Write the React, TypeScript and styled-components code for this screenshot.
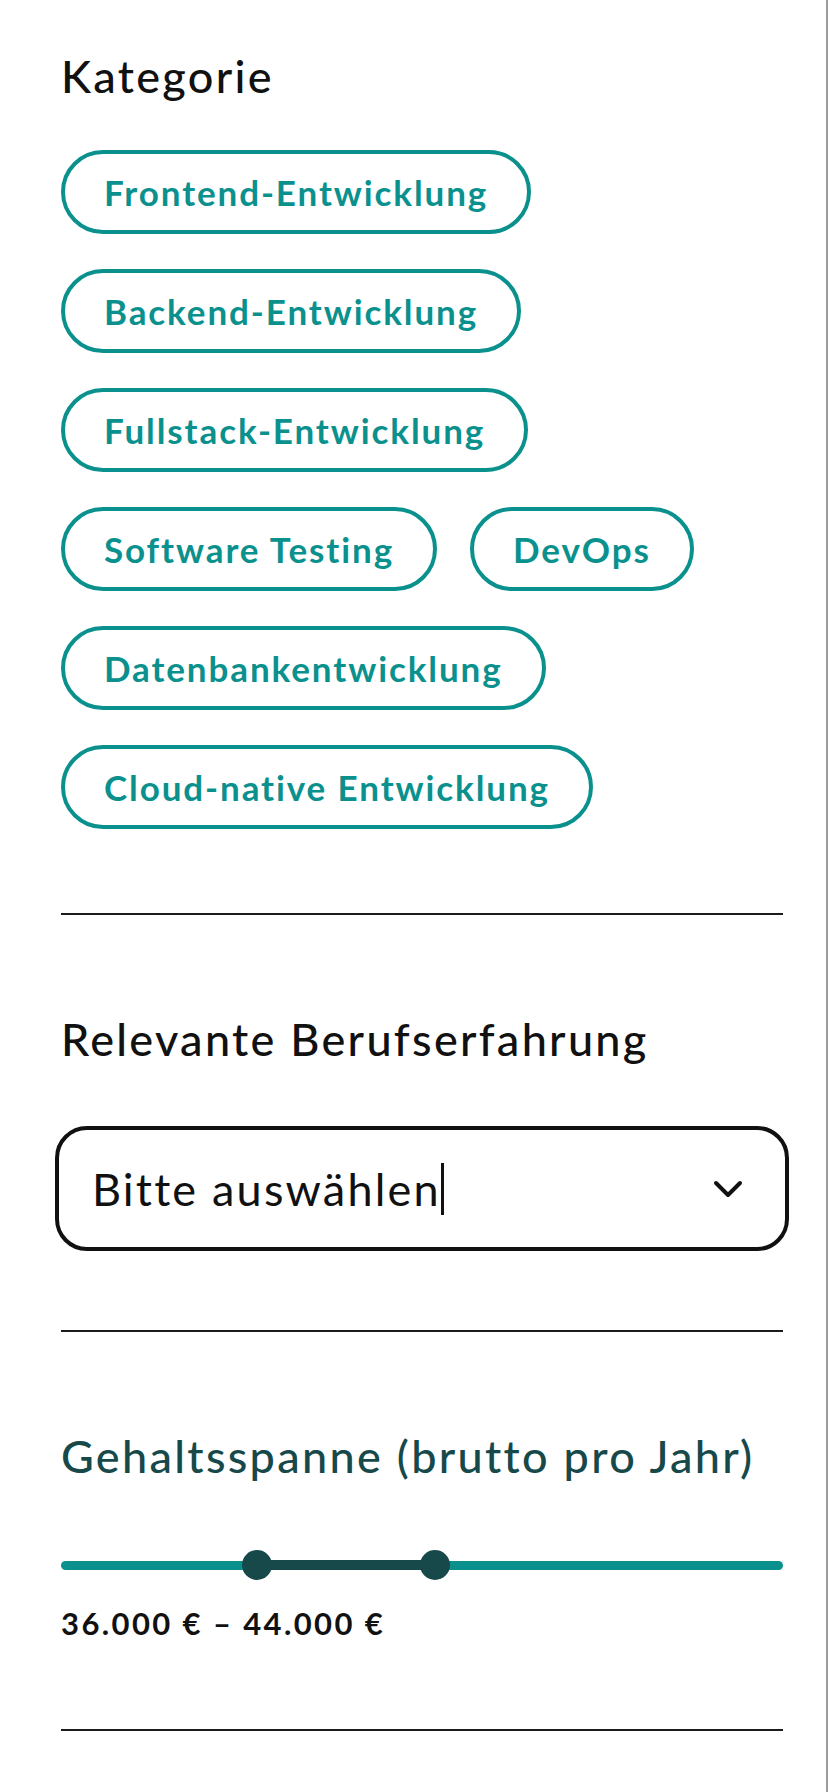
import React from 'react'
import styled, { createGlobalStyle } from 'styled-components'

const colors = {
    teal: '#0b918d',
    darkTeal: '#17494b',
    ink: '#111111',
    line: '#1c1c1c',
}

const GlobalStyle = createGlobalStyle`
    html, body {
        margin: 0;
        padding: 0;
        background: #ffffff;
    }
    body {
        font-family: Lato, "Noto Sans", "Liberation Sans", sans-serif;
        color: ${colors.ink};
    }
`

const Page = styled.main`
    min-height: 1792px;
    box-sizing: border-box;
    border-right: 2px solid #9c9c9c;
    padding: 48px 43px 0 61px;
`

const Section = styled.section`
    display: flex;
    flex-direction: column;
`

const Heading = styled.h2<{ $accent?: boolean }>`
    margin: 0;
    font-size: 45px;
    line-height: 56px;
    font-weight: 500;
    letter-spacing: 2.3px;
    color: ${(p) => (p.$accent ? colors.darkTeal : colors.ink)};
`

const ChipList = styled.div`
    display: flex;
    flex-direction: column;
    gap: 35px;
    margin-top: 46px;
`

const ChipRow = styled.div`
    display: flex;
    gap: 33px;
`

const Chip = styled.button`
    height: 84px;
    box-sizing: border-box;
    padding: 0 39px;
    border: 4px solid ${colors.teal};
    border-radius: 42px;
    background: #fff;
    color: ${colors.teal};
    font-family: inherit;
    font-size: 35px;
    font-weight: 700;
    letter-spacing: 1.9px;
    cursor: pointer;
`

const Divider = styled.hr`
    margin: 0;
    border: none;
    height: 2px;
    background: ${colors.line};
`

const Select = styled.div`
    margin: 59px -6px 0;
    height: 125px;
    box-sizing: border-box;
    border: 4px solid ${colors.ink};
    border-radius: 32px;
    display: flex;
    align-items: center;
    justify-content: space-between;
    padding: 0 42px 0 33px;
    font-size: 45px;
    letter-spacing: 2.2px;
    color: ${colors.ink};
`

const SelectText = styled.span`
    display: flex;
    align-items: center;
`

const Caret = styled.span`
    display: inline-block;
    width: 3px;
    height: 52px;
    background: ${colors.ink};
`

const SliderWrap = styled.div`
    position: relative;
    margin-top: 65px;
    height: 32px;
    display: flex;
    align-items: center;
`

const Track = styled.div`
    width: 100%;
    height: 9px;
    border-radius: 5px;
    background: ${colors.teal};
`

const Range = styled.div`
    position: absolute;
    top: 11px;
    height: 10px;
    background: ${colors.darkTeal};
`

const Thumb = styled.div`
    position: absolute;
    top: 1px;
    width: 30px;
    height: 30px;
    margin-left: -15px;
    border-radius: 50%;
    background: ${colors.darkTeal};
`

const RangeLabel = styled.p`
    margin: 22px 0 0;
    font-size: 31px;
    line-height: 40px;
    font-weight: 700;
    letter-spacing: 2.4px;
    color: ${colors.ink};
`

const categories = [
    ['Frontend-Entwicklung'],
    ['Backend-Entwicklung'],
    ['Fullstack-Entwicklung'],
    ['Software Testing', 'DevOps'],
    ['Datenbankentwicklung'],
    ['Cloud-native Entwicklung'],
]

const MIN = 27200
const MAX = 59600
const low = 36000
const high = 44000

const pct = (v: number) => ((v - MIN) / (MAX - MIN)) * 100

function Chevron() {
    return (
        <svg width="30" height="18" viewBox="0 0 30 18" fill="none">
            <path d="M3 3 L15 15 L27 3" stroke={colors.ink} strokeWidth="4" strokeLinecap="round" strokeLinejoin="round" />
        </svg>
    )
}

export default function App() {
    return (
        <>
            <GlobalStyle />
            <Page>
                <Section>
                    <Heading>Kategorie</Heading>
                    <ChipList>
                        {categories.map((row, i) => (
                            <ChipRow key={i}>
                                {row.map((c) => (
                                    <Chip key={c}>{c}</Chip>
                                ))}
                            </ChipRow>
                        ))}
                    </ChipList>
                </Section>

                <Divider style={{ marginTop: 84 }} />

                <Section style={{ paddingTop: 96 }}>
                    <Heading>Relevante Berufserfahrung</Heading>
                    <Select>
                        <SelectText>
                            Bitte auswählen
                            <Caret />
                        </SelectText>
                        <Chevron />
                    </Select>
                </Section>

                <Divider style={{ marginTop: 79 }} />

                <Section style={{ paddingTop: 96 }}>
                    <Heading $accent>Gehaltsspanne (brutto pro Jahr)</Heading>
                    <SliderWrap>
                        <Track />
                        <Range style={{ left: `${pct(low)}%`, width: `${pct(high) - pct(low)}%` }} />
                        <Thumb style={{ left: `${pct(low)}%` }} />
                        <Thumb style={{ left: `${pct(high)}%` }} />
                    </SliderWrap>
                    <RangeLabel>36.000 € – 44.000 €</RangeLabel>
                </Section>

                <Divider style={{ marginTop: 86 }} />
            </Page>
        </>
    )
}
